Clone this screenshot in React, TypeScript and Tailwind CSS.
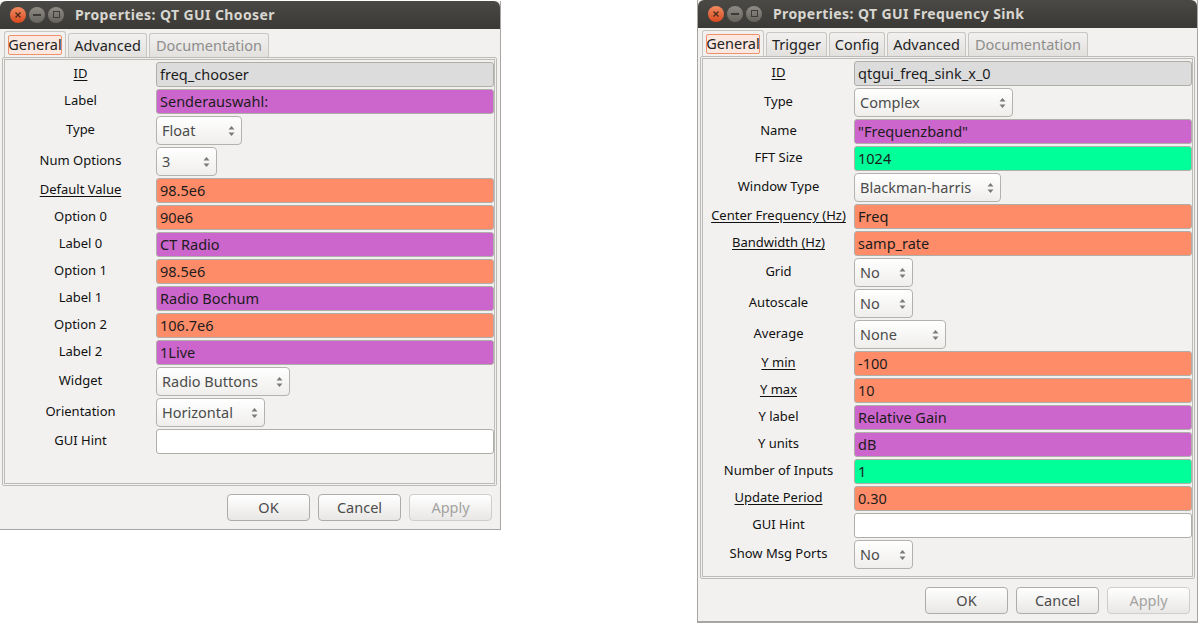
const FONT = "font-['Noto_Sans','Open_Sans',sans-serif]";

type Row = {
  label: string;
  value?: string;
  kind: "id" | "str" | "num" | "int" | "blank" | "combo";
  underline?: boolean;
  comboWidth?: string;
};

const CHOOSER_ROWS: Row[] = [
  { label: "ID", value: "freq_chooser", kind: "id", underline: true },
  { label: "Label", value: "Senderauswahl:", kind: "str" },
  { label: "Type", value: "Float", kind: "combo", comboWidth: "w-[86px]" },
  { label: "Num Options", value: "3", kind: "combo", comboWidth: "w-[61px]" },
  { label: "Default Value", value: "98.5e6", kind: "num", underline: true },
  { label: "Option 0", value: "90e6", kind: "num" },
  { label: "Label 0", value: "CT Radio", kind: "str" },
  { label: "Option 1", value: "98.5e6", kind: "num" },
  { label: "Label 1", value: "Radio Bochum", kind: "str" },
  { label: "Option 2", value: "106.7e6", kind: "num" },
  { label: "Label 2", value: "1Live", kind: "str" },
  { label: "Widget", value: "Radio Buttons", kind: "combo", comboWidth: "w-[134px]" },
  { label: "Orientation", value: "Horizontal", kind: "combo", comboWidth: "w-[109px]" },
  { label: "GUI Hint", kind: "blank" },
];

const SINK_ROWS: Row[] = [
  { label: "ID", value: "qtgui_freq_sink_x_0", kind: "id", underline: true },
  { label: "Type", value: "Complex", kind: "combo", comboWidth: "w-[159px]" },
  { label: "Name", value: '"Frequenzband"', kind: "str" },
  { label: "FFT Size", value: "1024", kind: "int" },
  { label: "Window Type", value: "Blackman-harris", kind: "combo", comboWidth: "w-[147px]" },
  { label: "Center Frequency (Hz)", value: "Freq", kind: "num", underline: true },
  { label: "Bandwidth (Hz)", value: "samp_rate", kind: "num", underline: true },
  { label: "Grid", value: "No", kind: "combo", comboWidth: "w-[59px]" },
  { label: "Autoscale", value: "No", kind: "combo", comboWidth: "w-[59px]" },
  { label: "Average", value: "None", kind: "combo", comboWidth: "w-[92px]" },
  { label: "Y min", value: "-100", kind: "num", underline: true },
  { label: "Y max", value: "10", kind: "num", underline: true },
  { label: "Y label", value: "Relative Gain", kind: "str" },
  { label: "Y units", value: "dB", kind: "str" },
  { label: "Number of Inputs", value: "1", kind: "int" },
  { label: "Update Period", value: "0.30", kind: "num", underline: true },
  { label: "GUI Hint", kind: "blank" },
  { label: "Show Msg Ports", value: "No", kind: "combo", comboWidth: "w-[59px]" },
];

const ENTRY_BG: Record<string, string> = {
  id: "bg-[#dcdcdc]",
  str: "bg-[#cc66cc]",
  num: "bg-[#ff8c69]",
  int: "bg-[#00ff99]",
  blank: "bg-white",
};

function Stepper() {
  return (
    <svg width="7" height="12" viewBox="0 0 7 12" className="shrink-0">
      <path d="M3.5 1 L6.5 4.5 H0.5 Z" fill="#7a7a78" />
      <path d="M3.5 11 L6.5 7.5 H0.5 Z" fill="#7a7a78" />
    </svg>
  );
}

function PropRow({ row }: { row: Row }) {
  const isCombo = row.kind === "combo";
  return (
    <div className="flex items-center">
      <div className={`w-[151px] shrink-0 pb-[3px] text-center text-[13px] leading-[16px] text-[#111] ${row.underline ? "underline underline-offset-2" : ""}`}>
        {row.label}
      </div>
      {isCombo ? (
        <div className={`${row.comboWidth} flex h-[29px] items-center justify-between rounded-[4px] border border-[#b4b2ae] bg-gradient-to-b from-white to-[#efeeec] pl-[5px] pr-[6px] text-[14.5px] text-[#4c4c4c]`}>
          <span>{row.value}</span>
          <Stepper />
        </div>
      ) : (
        <div className={`${ENTRY_BG[row.kind]} flex h-[25px] w-[338px] items-center rounded-[3px] border border-[#b0aea9] pl-[3px] text-[14.5px] text-[#1c1c1c]`}>
          {row.value}
        </div>
      )}
    </div>
  );
}

function TitleButtons() {
  return (
    <div className="flex items-center gap-[3px]">
      <div className="flex h-[16px] w-[16px] items-center justify-center rounded-full bg-gradient-to-b from-[#f08a5e] to-[#d9481c]">
        <svg width="8" height="8" viewBox="0 0 8 8">
          <path d="M1.5 1.5 L6.5 6.5 M6.5 1.5 L1.5 6.5" stroke="#4a2a1c" strokeWidth="1.3" />
        </svg>
      </div>
      <div className="flex h-[16px] w-[16px] items-center justify-center rounded-full bg-gradient-to-b from-[#8e8c84] to-[#65635c]">
        <div className="h-[2px] w-[8px] bg-[#3c3b37]" />
      </div>
      <div className="flex h-[16px] w-[16px] items-center justify-center rounded-full bg-gradient-to-b from-[#8e8c84] to-[#65635c]">
        <div className="h-[7px] w-[7px] border border-[#3c3b37]" />
      </div>
    </div>
  );
}

function DialogButton({ label, disabled }: { label: string; disabled?: boolean }) {
  return (
    <div
      className={`flex h-[27px] w-[83px] items-center justify-center rounded-[4px] border bg-gradient-to-b from-white to-[#e8e7e5] text-[14.5px] ${
        disabled ? "border-[#d0cecb] text-[#a3a3a0]" : "border-[#aeaca8] text-[#4c4c4c]"
      }`}
    >
      {label}
    </div>
  );
}

type Tab = { name: string; width: string; disabled?: boolean };

function Tabs({ tabs }: { tabs: Tab[] }) {
  return (
    <div className="flex gap-[2px] pl-[3px]">
      {tabs.map((tab, i) =>
        i === 0 ? (
          <div key={tab.name} className={`${tab.width} flex h-[27px] items-center justify-center rounded-t-[3px] border border-b-0 border-[#c8c6c2] bg-[#f2f1f0] px-[3px]`}>
            <span className="flex h-[20px] w-full items-center justify-center rounded-[2px] border border-[#f0916c] bg-[#fbe9e1] text-[14.5px] text-[#222]">
              {tab.name}
            </span>
          </div>
        ) : (
          <div
            key={tab.name}
            className={`${tab.width} mt-[2px] flex h-[25px] items-center justify-center rounded-t-[3px] border border-b-0 border-[#c8c6c2] bg-gradient-to-b from-[#f2f1f0] to-[#e2e0dd] text-[14.5px] ${
              tab.disabled ? "text-[#8e8e8c]" : "text-[#222]"
            }`}
          >
            {tab.name}
          </div>
        ),
      )}
    </div>
  );
}

interface WindowProps {
  title: string;
  tabs: Tab[];
  rows: Row[];
  outer: string;
  panel: string;
  footer: string;
}

function PropertiesWindow({ title, tabs, rows, outer, panel, footer }: WindowProps) {
  return (
    <div className={`${outer} flex shrink-0 flex-col border-[#a8a6a2] bg-[#f2f1f0]`}>
      <div className="flex h-[28px] shrink-0 items-center rounded-t-[6px] bg-gradient-to-b from-[#4a4945] to-[#3a3935] pb-px pl-[10px]">
        <TitleButtons />
        <span className="ml-[11px] text-[14px] font-bold tracking-[0.4px] text-[#d8d6d0]">{title}</span>
      </div>
      <div className="flex flex-1 flex-col px-[1px] pt-[2px]">
        <Tabs tabs={tabs} />
        <div className={`${panel} -mt-px mx-[1px] flex flex-col gap-[2px] rounded-[2px] border-[3px] border-double border-[#bdbbb7] pt-[2px]`}>
          {rows.map((row) => (
            <PropRow key={row.label} row={row} />
          ))}
        </div>
        <div className={`${footer} flex justify-end gap-[8px]`}>
          <DialogButton label="OK" />
          <DialogButton label="Cancel" />
          <DialogButton label="Apply" disabled />
        </div>
      </div>
    </div>
  );
}

export default function App() {
  return (
    <div className={`${FONT} flex h-[624px] w-[1200px] items-start overflow-hidden bg-white`}>
      <PropertiesWindow
        title="Properties: QT GUI Chooser"
        tabs={[
          { name: "General", width: "w-[62px]" },
          { name: "Advanced", width: "w-[79px]" },
          { name: "Documentation", width: "w-[120px]", disabled: true },
        ]}
        rows={CHOOSER_ROWS}
        outer="mt-px h-[529px] w-[501px] border-r border-b"
        panel="h-[429px] w-[495px]"
        footer="mt-[8px] pr-[7px]"
      />
      <PropertiesWindow
        title="Properties: QT GUI Frequency Sink"
        tabs={[
          { name: "General", width: "w-[62px]" },
          { name: "Trigger", width: "w-[61px]" },
          { name: "Config", width: "w-[56px]" },
          { name: "Advanced", width: "w-[79px]" },
          { name: "Documentation", width: "w-[120px]", disabled: true },
        ]}
        rows={SINK_ROWS}
        outer="ml-[196px] h-[623px] w-[501px] border-x border-b-2"
        panel="h-[523px] w-[495px]"
        footer="mt-[8px] pr-[6px]"
      />
    </div>
  );
}
